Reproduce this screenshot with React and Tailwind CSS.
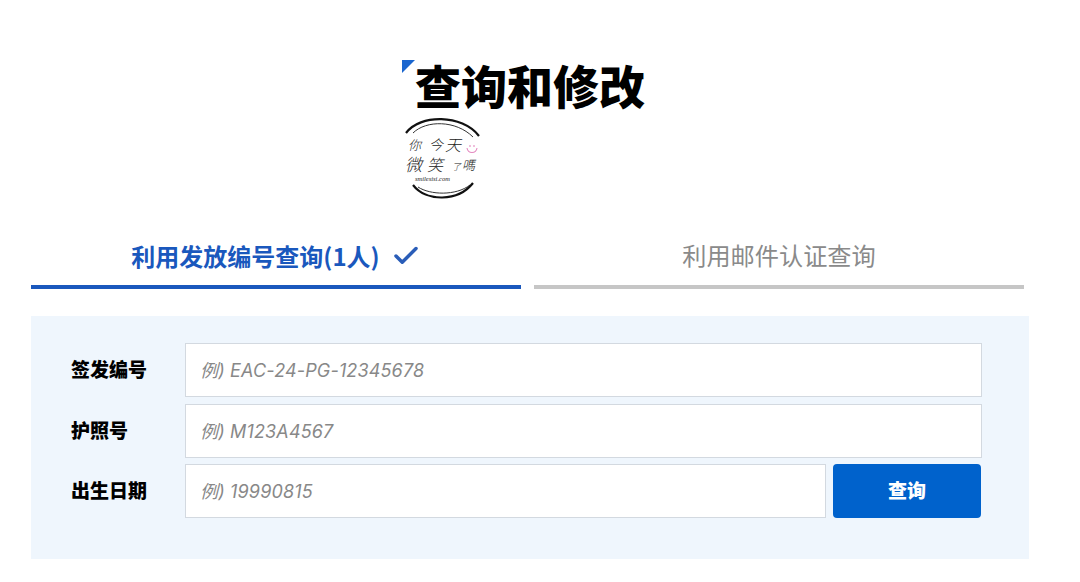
import React from "react";
import { Check } from "lucide-react";

const cjk = "font-['Noto_Sans_CJK_SC','Noto_Sans',sans-serif]";
const inputCls =
  "h-[54px] min-w-0 flex-1 border border-[#d3d9e0] bg-white pl-[14px] pr-3 text-[18px] italic tracking-[0.15px] text-[#333] outline-none placeholder:text-[#888] font-['Inter','Noto_Sans_CJK_SC',sans-serif]";

function Logo() {
  return (
    <svg width="80" height="84" viewBox="0 0 80 84" className="block">
      <path d="M4 15 C18 -4 60 -4 77 18" fill="none" stroke="#111" strokeWidth="2.2" />
      <path d="M11 15 C24 2 54 2 71 19" fill="none" stroke="#333" strokeWidth="1" />
      <path d="M16 69 C28 77 54 78 68 67" fill="none" stroke="#333" strokeWidth="1" />
      <path d="M11 67 C24 84 56 84 71 65" fill="none" stroke="#111" strokeWidth="2.2" />
      <g fill="#222" fontFamily="'Noto Sans CJK SC', sans-serif" fontWeight="300">
        <text x="6" y="32" fontSize="13" fontStyle="italic">你</text>
        <text x="27" y="32" fontSize="14" fontStyle="italic">今</text>
        <text x="43" y="33" fontSize="16" fontStyle="italic">天</text>
        <text x="3" y="53" fontSize="17" fontStyle="italic">微</text>
        <text x="25" y="53" fontSize="16" fontStyle="italic">笑</text>
        <text x="50" y="52" fontSize="9" fontStyle="italic">了</text>
        <text x="60" y="52" fontSize="13" fontStyle="italic">嗎</text>
        <text x="13" y="63" fontSize="6.5" fontStyle="italic" fontFamily="'Liberation Serif', serif">smilesisi.com</text>
      </g>
      <g fill="none" stroke="#e48ac0" strokeWidth="1.1">
        <path d="M65 30 C66 36 74 36 75 30" />
        <path d="M68 27 v2 M72 27 v2" />
      </g>
    </svg>
  );
}

function Row({ label, placeholder, className = "", children }) {
  return (
    <div className={`flex items-center ${className}`}>
      <label className="w-[114px] shrink-0 pb-[2px] text-[19px] font-black text-black">{label}</label>
      <input className={inputCls} placeholder={placeholder} />
      {children}
    </div>
  );
}

export default function App() {
  return (
    <div className={`h-[582px] w-[1080px] overflow-hidden bg-white pl-[31px] ${cjk}`}>
      <div className="flex flex-col items-center pr-[51px] pt-[60px]">
        <div className="relative w-[256px]">
          <div className="absolute left-0 top-0 h-[13px] w-[13px] bg-[#1a66cf] [clip-path:polygon(0_0,100%_0,0_100%)]" />
          <h1 className="pl-[13px] pt-[1px] text-[46px] font-black leading-[46px] tracking-normal text-black">查询和修改</h1>
          <div className="mt-[11px]"><Logo /></div>
        </div>
      </div>

      <div className="mt-[25px] flex w-[993px] gap-[13px]">
        <div className="flex h-[62px] w-[490px] items-center justify-center gap-[11px] border-b-4 border-[#1a58bd] pb-[1px] text-[24px] font-bold text-[#1a58bd]">
          <span>利用发放编号查询(1人)</span>
          <Check size={30} strokeWidth={2.8} className="text-[#2a5db8]" />
        </div>
        <div className="flex h-[62px] w-[490px] items-center justify-center border-b-4 border-[#c6c6c6] pb-[1px] text-[24.2px] text-[#8a8a8a]">
          利用邮件认证查询
        </div>
      </div>

      <form className="mt-[27px] h-[243px] w-[998px] bg-[#eff6fd] pl-[40px] pr-[47px] pt-[27px]">
        <Row label="签发编号" placeholder="例) EAC-24-PG-12345678" />
        <Row label="护照号" placeholder="例) M123A4567" className="mt-[7px]" />
        <Row label="出生日期" placeholder="例) 19990815" className="mt-[6px]">
          <button type="button" className="ml-[7px] mr-[1px] h-[54px] w-[148px] rounded-[4px] bg-[#0062cc] pb-[2px] text-[19px] font-black text-white">
            查询
          </button>
        </Row>
      </form>
    </div>
  );
}
